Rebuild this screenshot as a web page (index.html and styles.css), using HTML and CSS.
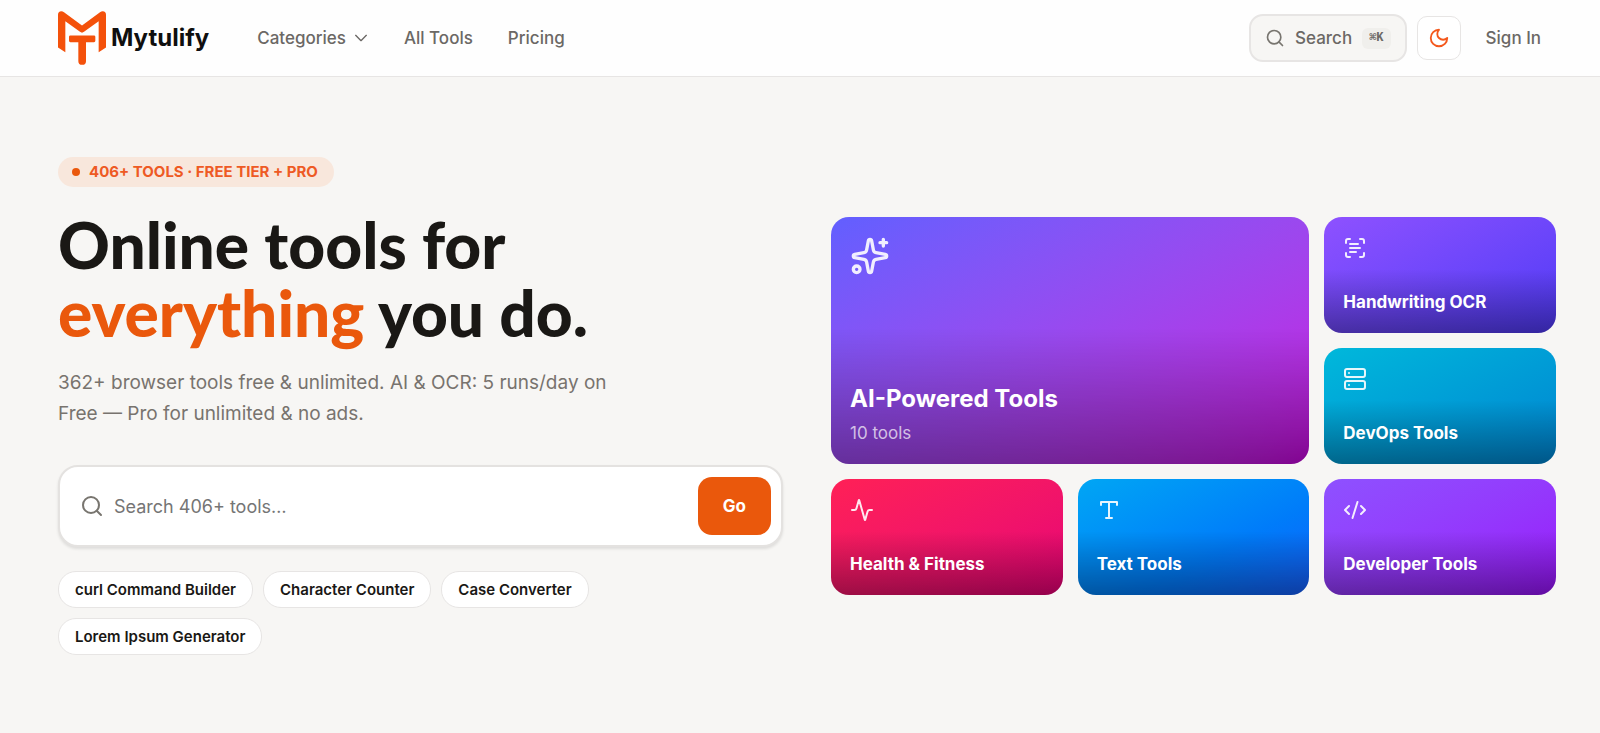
FILE: index.html
```
<!DOCTYPE html>
<html lang="en">
<head>
<meta charset="utf-8">
<meta name="viewport" content="width=device-width, initial-scale=1">
<title>Mytulify</title>
<link rel="stylesheet" href="styles.css">
</head>
<body>
<header class="header">
  <a class="brand" href="#">
    <svg class="brand-logo" viewBox="0 0 144 161" aria-hidden="true">
      <path d="M0 109V11Q0 0 10 0Q14 0 18 3L72 43L126 3Q130 0 134 0Q144 0 144 11V109L122 123V30L78 62Q72 67 66 62L22 30V123Z"/>
      <path d="M37 73H108Q112 73 112 77V89Q112 93 108 93H84V150Q84 161 72.500 161Q61 161 61 150V93H37Q33 93 33 89V77Q33 73 37 73Z"/>
    </svg>
    <span>Mytulify</span>
  </a>
  <nav class="nav">
    <button class="nav-item" type="button">Categories
      <svg class="icon icon-16" viewBox="0 0 24 24"><path d="m4 8 8 8 8-8"/></svg>
    </button>
    <a class="nav-item" href="#">All Tools</a>
    <a class="nav-item" href="#">Pricing</a>
  </nav>
  <div class="actions">
    <button class="search-button" type="button">
      <svg class="icon icon-20" viewBox="0 0 24 24"><circle cx="11" cy="11" r="8"/><path d="m21 21-4.300-4.300"/></svg>
      <span>Search</span>
      <kbd class="kbd">⌘K</kbd>
    </button>
    <button class="theme-button" type="button" aria-label="Toggle theme">
      <svg class="icon icon-22" viewBox="0 0 24 24"><path d="M12 3a6 6 0 0 0 9 9 9 9 0 1 1-9-9Z"/></svg>
    </button>
    <a class="sign-in" href="#">Sign In</a>
  </div>
</header>
<main class="hero">
  <section class="intro">
    <p class="badge"><span class="badge-dot"></span>406+ TOOLS · FREE TIER + PRO</p>
    <h1 class="title">Online tools for<br><span class="accent">everything</span> you do.</h1>
    <p class="lead">362+ browser tools free &amp; unlimited. AI &amp; OCR: 5 runs/day on Free — Pro for unlimited &amp; no ads.</p>
    <form class="search">
      <svg class="icon icon-24" viewBox="0 0 24 24"><circle cx="11" cy="11" r="8"/><path d="m21 21-4.300-4.300"/></svg>
      <input class="search-input" type="text" placeholder="Search 406+ tools…" aria-label="Search tools">
      <button class="go" type="submit">Go</button>
    </form>
    <div class="chips">
      <a class="chip" href="#">curl Command Builder</a>
      <a class="chip" href="#">Character Counter</a>
      <a class="chip" href="#">Case Converter</a>
      <a class="chip" href="#">Lorem Ipsum Generator</a>
    </div>
  </section>
  <section class="cards">
    <a class="card card-large card-ai" href="#">
      <svg class="icon icon-40" viewBox="0 0 24 24"><path d="M11.017 2.814a1 1 0 0 1 1.966 0l1.051 5.558a2 2 0 0 0 1.594 1.594l5.558 1.051a1 1 0 0 1 0 1.966l-5.558 1.051a2 2 0 0 0-1.594 1.594l-1.051 5.558a1 1 0 0 1-1.966 0l-1.051-5.558a2 2 0 0 0-1.594-1.594l-5.558-1.051a1 1 0 0 1 0-1.966l5.558-1.051a2 2 0 0 0 1.594-1.594z"/><path d="M20 2v4M22 4h-4"/><circle cx="4" cy="20" r="2"/></svg>
      <span class="card-text"><span class="card-title">AI-Powered Tools</span><span class="card-count">10 tools</span></span>
    </a>
    <a class="card card-ocr" href="#">
      <svg class="icon icon-24" viewBox="0 0 24 24"><path d="M3 7V5a2 2 0 0 1 2-2h2M17 3h2a2 2 0 0 1 2 2v2M21 17v2a2 2 0 0 1-2 2h-2M7 21H5a2 2 0 0 1-2-2v-2M7 8h8M7 12h10M7 16h6"/></svg>
      <span class="card-title">Handwriting OCR</span>
    </a>
    <a class="card card-devops" href="#">
      <svg class="icon icon-24" viewBox="0 0 24 24"><rect x="2" y="2" width="20" height="8" rx="2"/><rect x="2" y="14" width="20" height="8" rx="2"/><path d="M6 6h.01M6 18h.01"/></svg>
      <span class="card-title">DevOps Tools</span>
    </a>
    <a class="card card-health" href="#">
      <svg class="icon icon-24" viewBox="0 0 24 24"><path d="M22 12h-2.480a2 2 0 0 0-1.930 1.460l-2.350 8.360a.25.25 0 0 1-.48 0L9.240 2.180a.25.25 0 0 0-.48 0l-2.350 8.360A2 2 0 0 1 4.490 12H2"/></svg>
      <span class="card-title">Health &amp; Fitness</span>
    </a>
    <a class="card card-text-tools" href="#">
      <svg class="icon icon-24" viewBox="0 0 24 24"><path d="M4 7V4h16v3M9 20h6M12 4v16"/></svg>
      <span class="card-title">Text Tools</span>
    </a>
    <a class="card card-developer" href="#">
      <svg class="icon icon-24" viewBox="0 0 24 24"><path d="m18 16 4-4-4-4M6 8l-4 4 4 4M14.500 4l-5 16"/></svg>
      <span class="card-title">Developer Tools</span>
    </a>
  </section>
</main>
</body>
</html>
```
FILE: styles.css
```
* { box-sizing: border-box; }

body {
  margin: 0;
  background: #f7f6f4;
  color: #1a1815;
  font-family: Inter, "Liberation Sans", sans-serif;
  font-size: 17px;
  line-height: 24px;
}

a { color: inherit; text-decoration: none; }
button, input { font: inherit; color: inherit; }
button { cursor: pointer; }
h1, p { margin: 0; }

.icon {
  flex: none;
  fill: none;
  stroke: currentColor;
  stroke-width: 2;
  stroke-linecap: round;
  stroke-linejoin: round;
}
.icon-16 { width: 16px; height: 16px; }
.icon-20 { width: 20px; height: 20px; }
.icon-22 { width: 22px; height: 22px; }
.icon-24 { width: 24px; height: 24px; }
.icon-40 { width: 40px; height: 40px; }

.header {
  display: flex;
  align-items: center;
  height: 77px;
  padding: 0 44px 0 58px;
  background: #fefefe;
  border-bottom: 1px solid #e7e5e4;
  color: #6b6865;
  font-weight: 500;
}
.brand {
  display: flex;
  align-items: center;
  gap: 5px;
  color: #0f0f0f;
  font-size: 24px;
  font-weight: 700;
}
.brand-logo { width: 48px; height: 54px; fill: #f4510b; }
.nav { display: flex; align-items: center; gap: 35px; margin-left: 48px; }
.nav-item {
  display: flex;
  align-items: center;
  gap: 7px;
  padding: 0;
  border: 0;
  background: none;
}
.actions { display: flex; align-items: center; gap: 10px; margin-left: auto; }
.search-button {
  display: flex;
  align-items: center;
  gap: 10px;
  height: 48px;
  padding: 0 14px;
  border: 2px solid #e7e5e4;
  border-radius: 14px;
  background: #f7f6f4;
}
.search-button .icon { color: #78756f; }
.kbd {
  padding: 0 7px;
  border-radius: 6px;
  background: #f0efec;
  font: 700 12px/21px "Liberation Mono", monospace;
}
.theme-button {
  display: flex;
  align-items: center;
  justify-content: center;
  width: 44px;
  height: 44px;
  padding: 0;
  border: 1px solid #e7e5e4;
  border-radius: 10px;
  background: #fff;
  color: #f4581c;
}
.sign-in { padding: 0 15px; }

.hero {
  display: grid;
  grid-template-columns: minmax(0, 1fr) minmax(0, 1fr);
  align-items: center;
  gap: 48px;
  padding: 80px 44px 76px 58px;
}
.intro { display: flex; flex-direction: column; align-items: flex-start; }
.badge {
  display: flex;
  align-items: center;
  gap: 9px;
  padding: 0 16px 0 14px;
  border-radius: 15px;
  background: #f8e7dc;
  color: #ee5a24;
  font-size: 15px;
  font-weight: 700;
  line-height: 30px;
}
.badge-dot { width: 8px; height: 8px; border-radius: 50%; background: #ea580c; }
.title {
  margin-top: 24px;
  font-family: Lato, "Open Sans", sans-serif;
  font-size: 64px;
  font-weight: 900;
  line-height: 68px;
}
.accent { color: #ea580c; }
.lead {
  max-width: 570px;
  margin-top: 20px;
  color: #78736e;
  font-size: 19px;
  line-height: 31px;
}
.search {
  display: flex;
  align-items: center;
  gap: 10px;
  width: 100%;
  margin-top: 36px;
  padding: 10px 10px 10px 20px;
  border: 2px solid #e4e2e0;
  border-radius: 20px;
  background: #fff;
  box-shadow: 0 2px 3px #0000001a;
}
.search .icon { color: #78756f; }
.search-input {
  flex: 1;
  min-width: 0;
  height: 48px;
  padding: 0;
  border: 0;
  outline: 0;
  background: none;
  font-size: 18px;
}
.search-input::placeholder { color: #757575; opacity: 1; }
.go {
  height: 58px;
  padding: 0 25px;
  border: 0;
  border-radius: 14px;
  background: #ea580c;
  color: #fff;
  font-weight: 700;
}
.chips { display: flex; flex-wrap: wrap; gap: 10px; margin-top: 24px; }
.chip {
  padding: 0 16px;
  border: 1px solid #e7e5e4;
  border-radius: 18px;
  background: #fff;
  font-size: 15px;
  font-weight: 600;
  line-height: 35px;
}

.cards {
  display: grid;
  grid-template-columns: repeat(3, minmax(0, 1fr));
  grid-auto-rows: minmax(116px, auto);
  gap: 15px;
}
.card {
  display: flex;
  flex-direction: column;
  justify-content: space-between;
  padding: 19px;
  border-radius: 18px;
  color: #fff;
}
.card .icon { opacity: 0.9; }
.card-large { grid-column: span 2; grid-row: span 2; }
.card-text { display: flex; flex-direction: column; gap: 6px; }
.card-title { font-weight: 700; }
.card-large .card-title { font-size: 24px; line-height: 32px; }
.card-count { color: #ffffffb3; }
.card-ai { background: linear-gradient(to top, #00000059, transparent 55%), linear-gradient(to bottom right in oklab, #615fff, #c800de); }
.card-ocr { background: linear-gradient(to top, #00000059, transparent 55%), linear-gradient(to bottom right in oklab, #8e51ff, #4f39f6); }
.card-devops { background: linear-gradient(to top, #00000059, transparent 55%), linear-gradient(to bottom right in oklab, #00b8db, #0084d1); }
.card-health { background: linear-gradient(to top, #00000059, transparent 55%), linear-gradient(to bottom right in oklab, #ff2056, #e60076); }
.card-text-tools { background: linear-gradient(to top, #00000059, transparent 55%), linear-gradient(to bottom right in oklab, #00a6f4, #155dfc); }
.card-developer { background: linear-gradient(to top, #00000059, transparent 55%), linear-gradient(to bottom right in oklab, #8e51ff, #9810fa); }
```
